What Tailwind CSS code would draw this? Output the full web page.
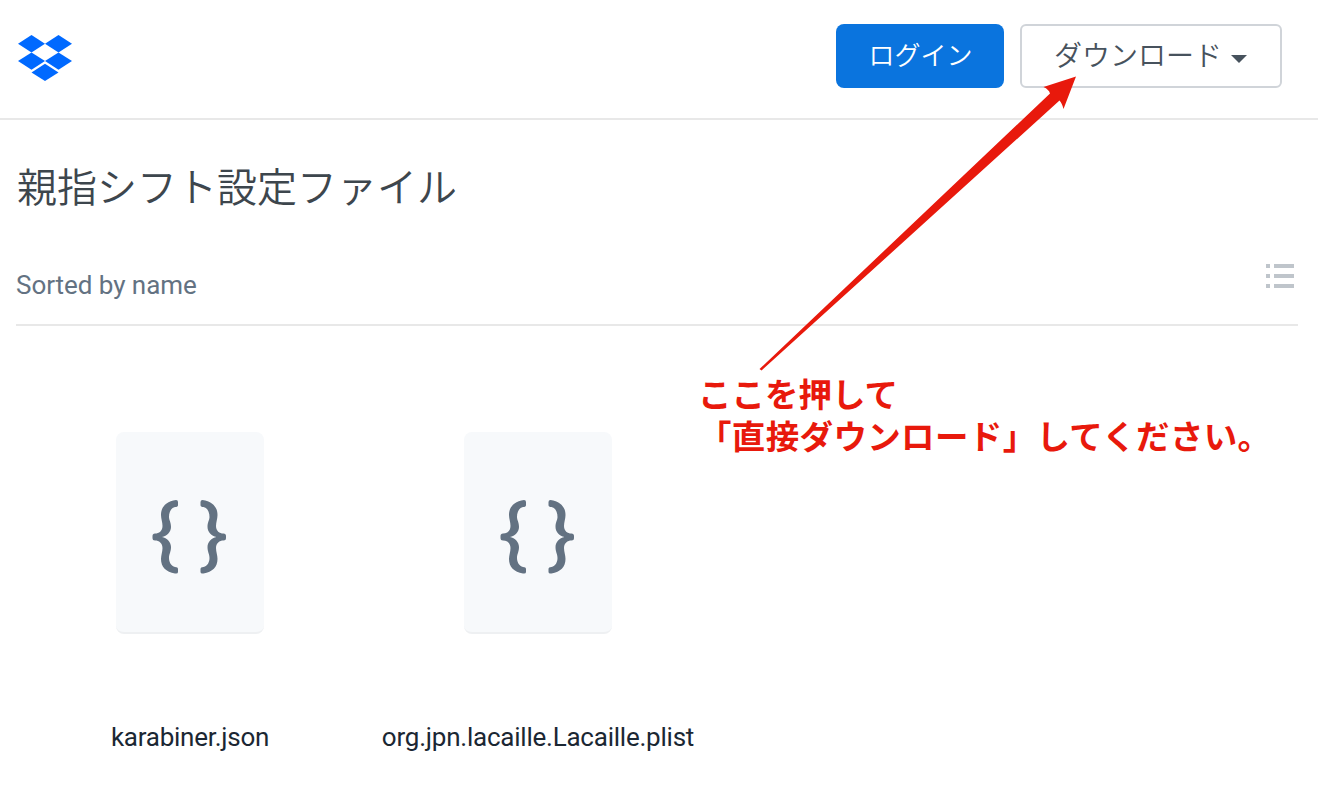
<!DOCTYPE html>
<html lang="ja">

<head>
    <meta charset="UTF-8">
    <meta name="viewport" content="width=device-width, initial-scale=1.0">
    <title>親指シフト設定ファイル</title>
    <script src="https://cdn.jsdelivr.net/npm/@tailwindcss/browser@4"></script>
</head>

<body class="relative h-screen overflow-hidden bg-white font-['Roboto','Noto_Sans_CJK_JP',sans-serif]">
    <header class="flex h-[120px] items-start justify-between border-b-2 border-[#e8e8e8] pt-6 pr-9 pl-[18px]">
        <svg class="mt-[11px] h-[46px] w-[54px]" viewBox="0 0 54 46" fill="#0069ff">
            <path d="M13.5 0L27 8.7L13.5 17.4L0 8.7Z" />
            <path d="M40.5 0L54 8.7L40.5 17.4L27 8.7Z" />
            <path d="M13.5 17.4L27 26.1L13.5 34.7L0 26.1Z" />
            <path d="M40.5 17.4L54 26.1L40.5 34.7L27 26.1Z" />
            <path d="M27 28.7L40.5 37.4L27 46L13.5 37.4Z" />
        </svg>
        <div class="flex gap-4">
            <button class="h-16 w-[168px] rounded-lg bg-[#0a74de] pl-px text-[26px] leading-[64px] font-[350] text-white">ログイン</button>
            <button class="flex h-16 w-[262px] items-center rounded-md border-2 border-[#d0d4d9] pl-8 text-[28px] leading-[60px] font-[350] text-[#47525d]">
                <span class="pt-0.5">ダウンロード</span>
                <svg class="mt-[5px] ml-[9px] h-2 w-4" viewBox="0 0 16 8" fill="#47525d">
                    <path d="M0 0H16L8 8Z" />
                </svg>
            </button>
        </div>
    </header>

    <main class="pr-5 pl-4">
        <h1 class="pt-[39px] pl-px text-[40px] leading-[59px] font-[350] text-[#3d464d]">親指シフト設定ファイル</h1>
        <div class="flex h-[108px] items-start justify-between border-b-2 border-[#e8e8e8]">
            <span class="mt-[49px] text-[26px] leading-[36px] tracking-[-0.05px] text-[#637282]">Sorted by name</span>
            <svg class="mt-[46px] mr-1 h-6 w-7" viewBox="0 0 28 24" fill="#bfc5cb">
                <path d="M0 0h4v4H0zM8 0h20v4H8zM0 10h4v4H0zM8 10h20v4H8zM0 20h4v4H0zM8 20h20v4H8z" />
            </svg>
        </div>

        <ul class="flex pt-[106px]">
            <li class="flex w-[348px] flex-col items-center">
                <div class="flex h-[202px] w-[148px] justify-center rounded-lg border-b-2 border-[#eef0f2] bg-[#f7f9fb] pr-0.5">
                    <svg class="mt-[68px] h-[74px] w-[74px]" viewBox="0 0 74 74" fill="#637282">
                        <path id="brace" d="M24 0Q26 0 26 2V5Q26 7 23 7C19 8 17 12 17 17C17 20 19 22 19 27C19 32 15 36 10 37C15 38 19 42 19 47C19 52 17 54 17 58C17 62 19 66 23 67Q26 67 26 69V72Q26 74 23 73.5C14 72 9 67 9 59C9 55 10.5 52 10.5 48C10.5 43 7 40.5 3 40.5Q0.5 40.5 0.5 38V36Q0.5 33.5 3 33.5C7 33.5 10.5 31 10.5 26C10.5 22 9 19 9 15C9 7 14 1.5 24 0Z" />
                        <use href="#brace" transform="translate(74.5 0) scale(-1 1)" />
                    </svg>
                </div>
                <span class="mt-[85px] text-[26px] leading-[36px] tracking-[-0.26px] text-[#1b2733]">karabiner.json</span>
            </li>
            <li class="flex w-[348px] flex-col items-center">
                <div class="flex h-[202px] w-[148px] justify-center rounded-lg border-b-2 border-[#eef0f2] bg-[#f7f9fb] pr-0.5">
                    <svg class="mt-[68px] h-[74px] w-[74px]" viewBox="0 0 74 74" fill="#637282">
                        <use href="#brace" />
                        <use href="#brace" transform="translate(74.5 0) scale(-1 1)" />
                    </svg>
                </div>
                <span class="mt-[85px] text-[26px] leading-[36px] tracking-[-0.23px] text-[#1b2733]">org.jpn.lacaille.Lacaille.plist</span>
            </li>
        </ul>
    </main>

    <!-- Download hint -->
    <svg class="absolute top-0 left-0 h-[804px] w-[1318px]" viewBox="0 0 1318 804" fill="#e8190c">
        <path d="M759.5 369L1050 93.5Q1049 89.5 1043.5 87L1076 76.5L1063.5 109Q1062 103 1059.5 100.5L761.5 370.5Z" />
    </svg>
    <p class="absolute top-[375px] left-[698px] text-[33.5px] leading-[42px] font-bold whitespace-nowrap text-[#e8190c]">ここを押して<br><span class="tracking-[0.35px]">「直接ダウンロード」してください。</span></p>
</body>

</html>
